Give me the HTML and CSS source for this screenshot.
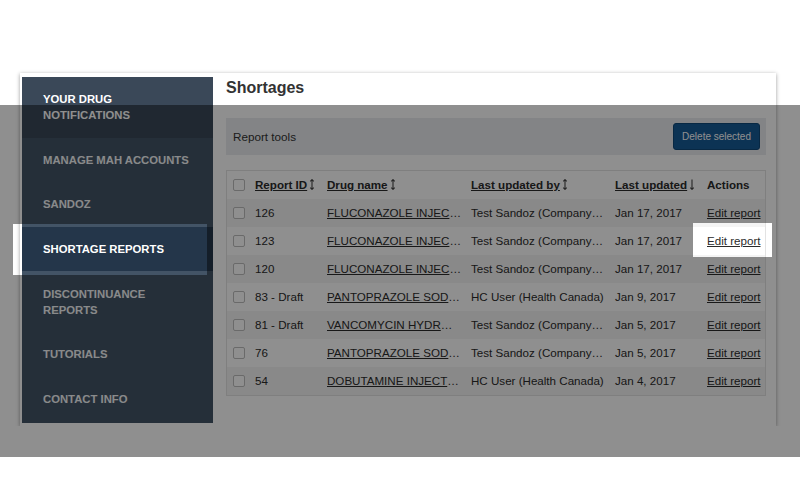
FILE: index.html
```html
<!DOCTYPE html>
<html lang="en">
<head>
<meta charset="utf-8">
<title>Shortages</title>
<link rel="stylesheet" href="styles.css">
</head>
<body>
<div class="page">
  <div class="card">
    <nav class="sidebar">
      <a class="nav-item hover" href="#">Your drug notifications</a>
      <a class="nav-item" href="#">Manage MAH accounts</a>
      <a class="nav-item" href="#">Sandoz</a>
      <a class="nav-item active" href="#">Shortage reports</a>
      <a class="nav-item" href="#">Discontinuance reports</a>
      <a class="nav-item" href="#">Tutorials</a>
      <a class="nav-item" href="#">Contact info</a>
    </nav>
    <main class="main">
      <h1 class="title">Shortages</h1>
      <div class="tools">
        <span>Report tools</span>
        <button class="btn" type="button">Delete selected</button>
      </div>
      <div class="table-box">
        <table class="grid">
          <colgroup>
            <col class="c-cb"><col class="c-id"><col class="c-drug"><col class="c-by"><col class="c-date"><col class="c-act">
          </colgroup>
          <thead>
            <tr>
              <th class="cb-cell"><span class="cb"></span></th>
              <th><a href="#">Report ID</a><svg class="sort" viewBox="0 0 6 11"><path d="M3 0.6V10.4M1.3 2.3L3 0.6L4.7 2.3M1.3 8.7L3 10.4L4.7 8.7"/></svg></th>
              <th><a href="#">Drug name</a><svg class="sort" viewBox="0 0 6 11"><path d="M3 0.6V10.4M1.3 2.3L3 0.6L4.7 2.3M1.3 8.7L3 10.4L4.7 8.7"/></svg></th>
              <th><a href="#">Last updated by</a><svg class="sort" viewBox="0 0 6 11"><path d="M3 0.6V10.4M1.3 2.3L3 0.6L4.7 2.3M1.3 8.7L3 10.4L4.7 8.7"/></svg></th>
              <th><a href="#">Last updated</a><svg class="sort" viewBox="0 0 6 11"><path d="M3 0.6V10.4M1.3 8.7L3 10.4L4.7 8.7"/></svg></th>
              <th>Actions</th>
            </tr>
          </thead>
          <tbody>
            <tr><td class="cb-cell"><span class="cb"></span></td><td>126</td><td class="trunc"><a href="#">FLUCONAZOLE INJECTION USP</a></td><td class="trunc">Test Sandoz (Company Admin)</td><td>Jan 17, 2017</td><td><a href="#">Edit report</a></td></tr>
            <tr><td class="cb-cell"><span class="cb"></span></td><td>123</td><td class="trunc"><a href="#">FLUCONAZOLE INJECTION USP</a></td><td class="trunc">Test Sandoz (Company Admin)</td><td>Jan 17, 2017</td><td><a href="#">Edit report</a></td></tr>
            <tr><td class="cb-cell"><span class="cb"></span></td><td>120</td><td class="trunc"><a href="#">FLUCONAZOLE INJECTION USP</a></td><td class="trunc">Test Sandoz (Company Admin)</td><td>Jan 17, 2017</td><td><a href="#">Edit report</a></td></tr>
            <tr><td class="cb-cell"><span class="cb"></span></td><td>83 - Draft</td><td class="trunc"><a href="#">PANTOPRAZOLE SODIUM FOR INJECTION</a></td><td class="trunc">HC User (Health Canada)</td><td>Jan 9, 2017</td><td><a href="#">Edit report</a></td></tr>
            <tr><td class="cb-cell"><span class="cb"></span></td><td>81 - Draft</td><td class="trunc"><a href="#">VANCOMYCIN HYDROCHLORIDE</a></td><td class="trunc">Test Sandoz (Company Admin)</td><td>Jan 5, 2017</td><td><a href="#">Edit report</a></td></tr>
            <tr><td class="cb-cell"><span class="cb"></span></td><td>76</td><td class="trunc"><a href="#">PANTOPRAZOLE SODIUM FOR INJECTION</a></td><td class="trunc">Test Sandoz (Company Admin)</td><td>Jan 5, 2017</td><td><a href="#">Edit report</a></td></tr>
            <tr><td class="cb-cell"><span class="cb"></span></td><td>54</td><td class="trunc"><a href="#">DOBUTAMINE INJECTION USP</a></td><td class="trunc">HC User (Health Canada)</td><td>Jan 4, 2017</td><td><a href="#">Edit report</a></td></tr>
          </tbody>
        </table>
      </div>
    </main>
  </div>
</div>
<div class="overlay"></div>
</body>
</html>
```

FILE: styles.css
```css
html, body {
  margin: 0;
  background: #fff;
  font-family: "Liberation Sans", Arial, sans-serif;
}

.page {
  padding: 73px 24px 0 20px;
}

.card {
  display: flex;
  width: 756px;
  height: 353px;
  box-sizing: border-box;
  padding: 4px 10px 3px 2px;
  background: #fff;
  box-shadow: 0 1px 4px rgba(0, 0, 0, 0.4);
}

.sidebar {
  flex: none;
  width: 191px;
  background: #435466;
  overflow: hidden;
}

.nav-item {
  display: block;
  padding: 14.3px 20px 14.3px 21px;
  font-size: 11.3px;
  font-weight: bold;
  line-height: 16px;
  color: #f4f6f8;
  text-transform: uppercase;
  text-decoration: none;
}

.nav-item.hover {
  background: #3a4858;
  color: #fff;
}

.nav-item.active {
  background: #24364a;
  color: #fff;
}

.main {
  flex: 1;
  min-width: 0;
  padding: 1px 0 0 13px;
}

.title {
  margin: 0;
  font-size: 16px;
  line-height: 20px;
  font-weight: bold;
  color: #333;
}

.tools {
  margin-top: 20px;
  height: 37px;
  display: flex;
  align-items: center;
  justify-content: space-between;
  padding: 0 6px 0 7px;
  background: #e9ecef;
  font-size: 11.7px;
  color: #333;
}

.btn {
  height: 27px;
  padding: 0 8px;
  font-family: inherit;
  font-size: 10px;
  color: #fff;
  background: #175b96;
  border: 1px solid #0f4878;
  border-radius: 3px;
}

.table-box {
  margin-top: 15px;
  border: 1px solid #e3e3e3;
}

.grid {
  width: 100%;
  border-collapse: collapse;
  table-layout: fixed;
  font-size: 11.6px;
  color: #2b2b2b;
}

.c-cb { width: 23px; }
.c-id { width: 72px; }
.c-drug { width: 144px; }
.c-by { width: 144px; }
.c-date { width: 92px; }
.c-act { width: 63px; }

.grid th,
.grid td {
  padding: 7px 0 7px 5px;
  height: 14px;
  line-height: 14px;
  text-align: left;
  white-space: nowrap;
  overflow: hidden;
}

.grid th {
  font-weight: bold;
}

.grid a {
  color: #2b2b2b;
  text-decoration: underline;
}

.grid td.trunc {
  padding-right: 5px;
  text-overflow: ellipsis;
}

.grid tbody tr:nth-child(odd) {
  background: #f4f4f4;
}

.grid .cb-cell {
  padding-left: 6px;
}

.cb {
  display: inline-block;
  width: 10px;
  height: 10px;
  border: 1px solid #bdbdbd;
  border-radius: 2px;
  background: #fff;
  vertical-align: -2px;
}

.sort {
  width: 6px;
  height: 11px;
  margin-left: 2px;
  vertical-align: -1px;
  fill: none;
  stroke: #444;
  stroke-width: 1.1;
}

.overlay {
  position: absolute;
  left: 0;
  top: 105px;
  width: 800px;
  height: 352px;
  background: rgba(0, 0, 0, 0.44);
  clip-path: path(evenodd, "M0 0H800V352H0Z M13 119H207V170H13Z M693 118H772V152H693Z");
}
```
